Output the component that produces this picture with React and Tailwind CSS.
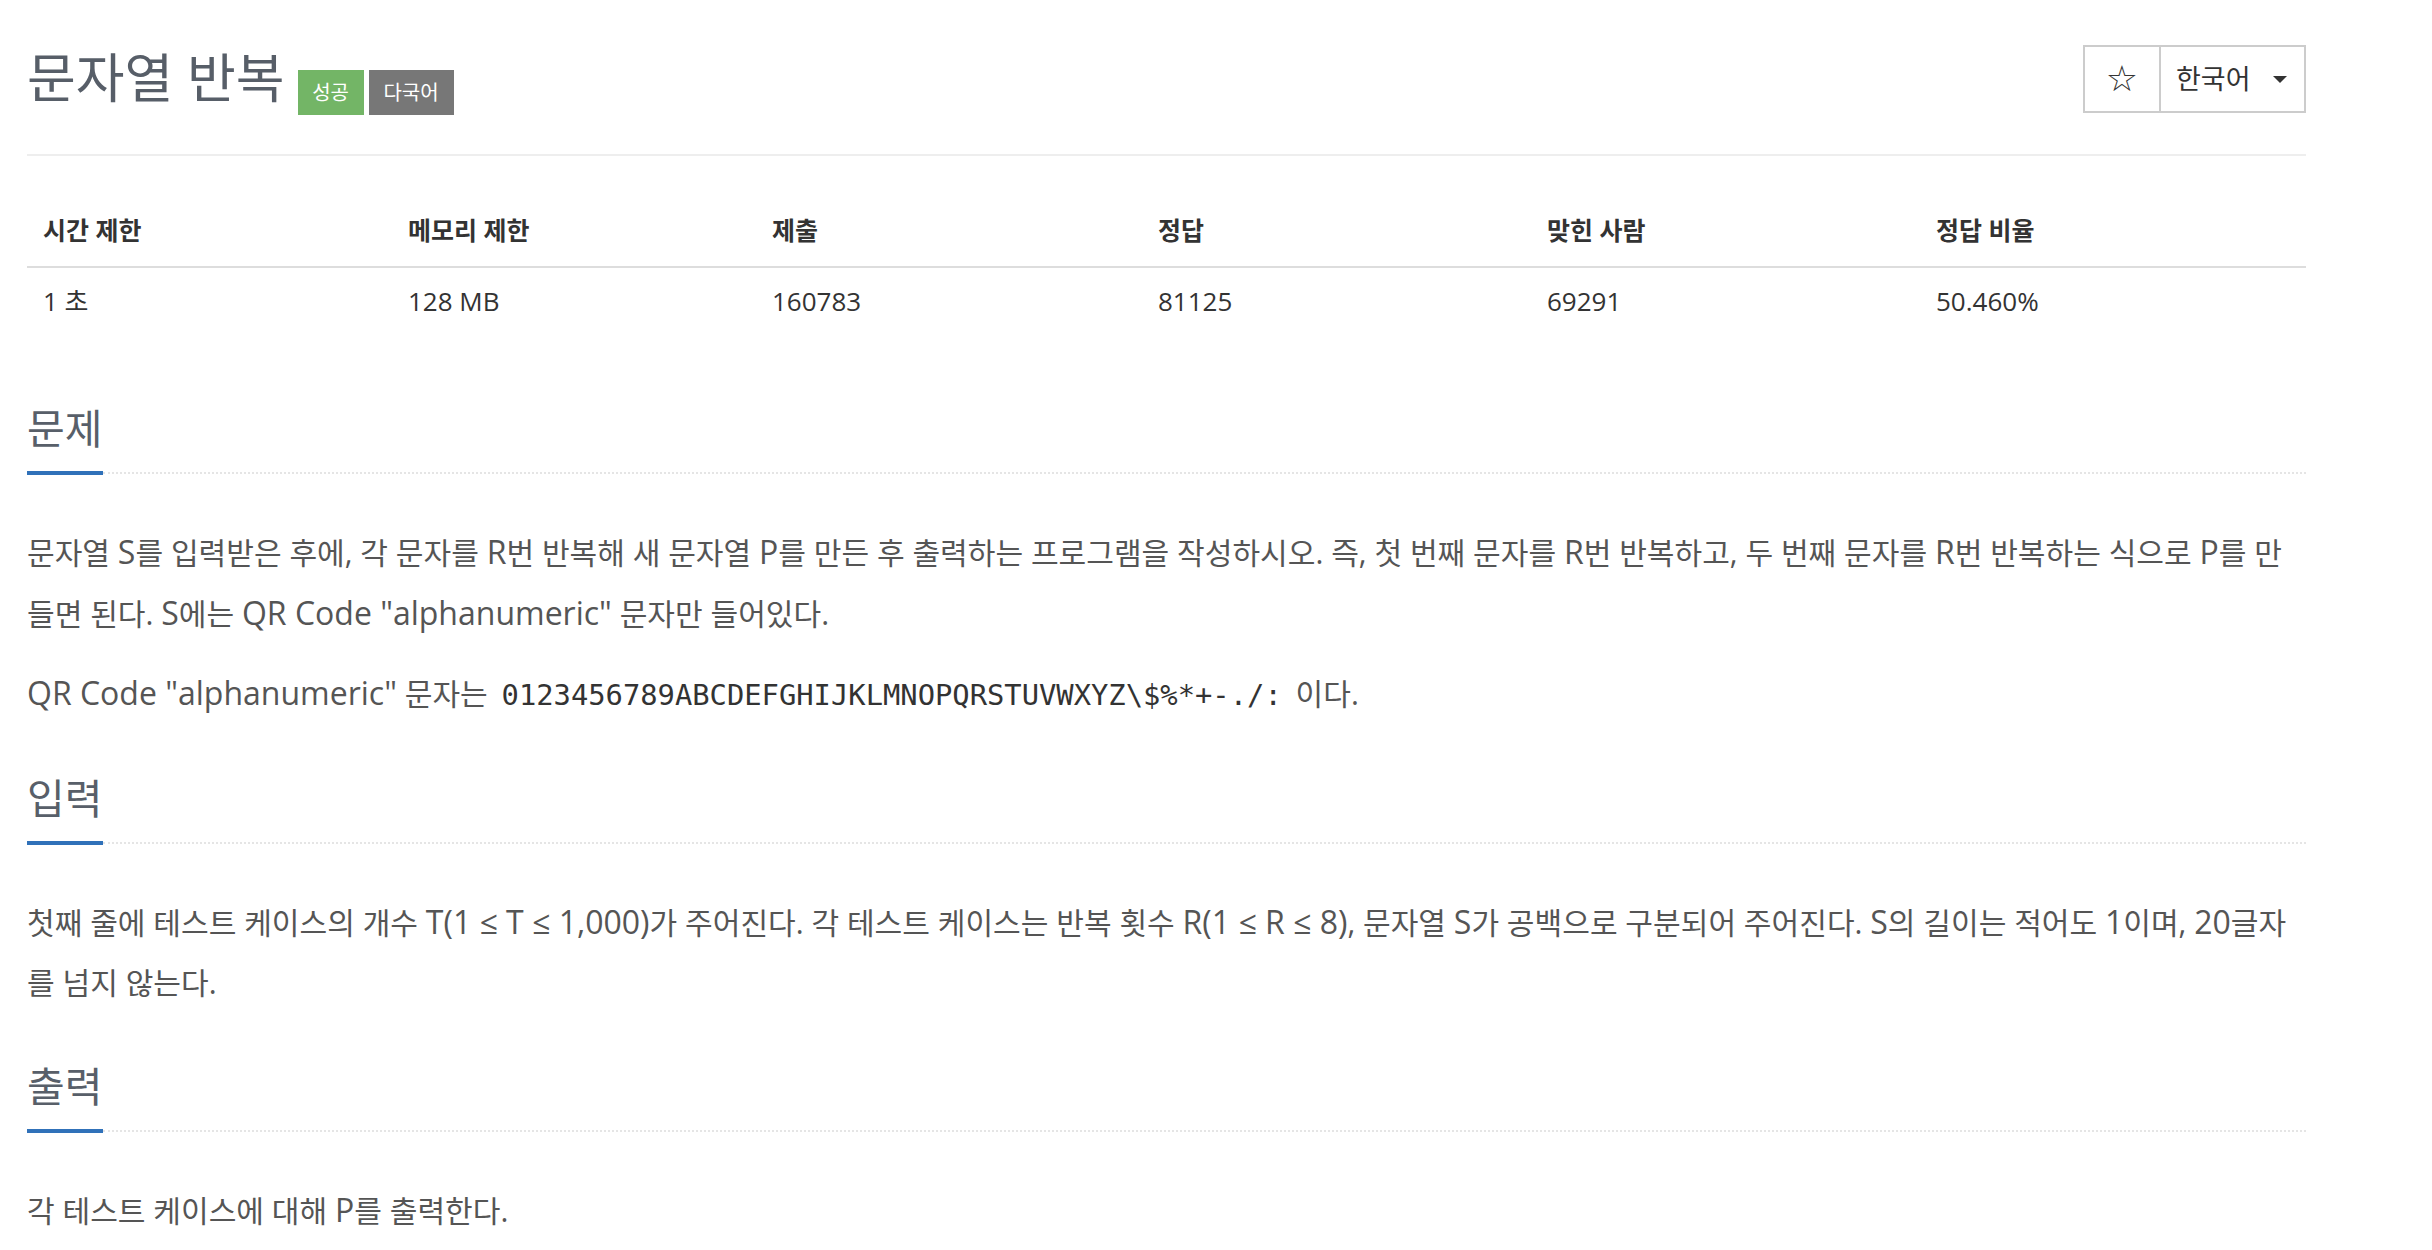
import React from 'react';

const stats = [
  { label: '시간 제한', value: '1 초' },
  { label: '메모리 제한', value: '128 MB' },
  { label: '제출', value: '160783' },
  { label: '정답', value: '81125' },
  { label: '맞힌 사람', value: '69291' },
  { label: '정답 비율', value: '50.460%' },
];

// latin runs sit a bit larger than the hangul in the original
const LATIN_RUN = /([A-Za-z0-9"(](?:[A-Za-z0-9 "(),≤]*[A-Za-z0-9")])?)/;
const Kr = ({ text }) =>
  text.split(LATIN_RUN).map((part, i) =>
    /^[A-Za-z0-9"(]/.test(part) ? (
      <span key={i} className="text-[1.064em]">{part}</span>
    ) : (
      part
    )
  );

const Headline = ({ title }) => (
  <div className="mt-[47px]">
    <h2 className="text-[41px] leading-[52px] text-[#585f69]">{title}</h2>
    <div className="flex items-center mt-[17px]">
      <div className="w-[76px] h-[4px] bg-[#3071b9]" />
      <div className="flex-1 border-t-2 border-dotted border-[#e5e5e5]" />
    </div>
  </div>
);

const Para = ({ children, first }) => (
  <p className={`${first ? 'mt-[47px]' : 'mt-[19px]'} text-[30.08px] leading-[60px] text-[#555]`}>{children}</p>
);

export default function App() {
  return (
    <div className="bg-white min-h-screen font-['Open_Sans','Noto_Sans_CJK_KR',sans-serif]">
      <div className="ml-[27px] w-[2279px] pb-[40px]">
        {/* header */}
        <div className="flex justify-between items-start pt-[44px] pb-[39px] border-b-2 border-[#eee]">
          <div className="flex items-start">
            <h1 className="text-[53px] leading-[68px] text-[#575e68]">문자열 반복</h1>
            <div className="flex gap-[5px] ml-[13px] mt-[26px]">
              <span className="h-[45px] w-[66px] flex items-center justify-center bg-[#73b566] text-white text-[20px]">성공</span>
              <span className="h-[45px] w-[85px] flex items-center justify-center bg-[#777] text-white text-[20px]">다국어</span>
            </div>
          </div>
          <div className="flex h-[68px] mt-[1px] border-2 border-[#ccc] text-[#333]">
            <div className="w-[76px] flex items-center justify-center border-r-2 border-[#ccc] text-[36px] font-['DejaVu_Sans',sans-serif]">☆</div>
            <div className="w-[143px] flex items-center pl-[15px] text-[27px]">
              <span>한국어</span>
              <span className="ml-[22px] w-0 h-0 border-l-[7px] border-r-[7px] border-t-[7px] border-l-transparent border-r-transparent border-t-[#333]" />
            </div>
          </div>
        </div>

        {/* stats table */}
        <div className="mt-[42px] grid grid-cols-[365px_364px_386px_389px_389px_1fr] text-[#333]">
          {stats.map((s) => (
            <div key={s.label} className="pl-[16px] pt-[16px] pb-[20px] leading-[32px] text-[25px] font-bold border-b-2 border-[#ddd]">
              {s.label}
            </div>
          ))}
          {stats.map((s) => (
            <div key={s.label + '-v'} className="pl-[16px] py-[17px] leading-[32px] text-[26px]">
              {s.value}
            </div>
          ))}
        </div>

        <div className="pt-[21px]">
          <Headline title="문제" />
          <Para first>
            <Kr text={'문자열 S를 입력받은 후에, 각 문자를 R번 반복해 새 문자열 P를 만든 후 출력하는 프로그램을 작성하시오. 즉, 첫 번째 문자를 R번 반복하고, 두 번째 문자를 R번 반복하는 식으로 P를 만들면 된다. S에는 QR Code "alphanumeric" 문자만 들어있다.'} />
          </Para>
          <Para>
            <Kr text={'QR Code "alphanumeric" 문자는 '} />
            <code className="px-[6px] text-[28.8px] text-[#333] font-['DejaVu_Sans_Mono',monospace]">0123456789ABCDEFGHIJKLMNOPQRSTUVWXYZ\$%*+-./:</code>{' '}
            이다.
          </Para>

          <Headline title="입력" />
          <Para first>
            <Kr text="첫째 줄에 테스트 케이스의 개수 T(1 ≤ T ≤ 1,000)가 주어진다. 각 테스트 케이스는 반복 횟수 R(1 ≤ R ≤ 8), 문자열 S가 공백으로 구분되어 주어진다. S의 길이는 적어도 1이며, 20글자를 넘지 않는다." />
          </Para>

          <Headline title="출력" />
          <Para first>
            <Kr text="각 테스트 케이스에 대해 P를 출력한다." />
          </Para>
        </div>
      </div>
    </div>
  );
}
